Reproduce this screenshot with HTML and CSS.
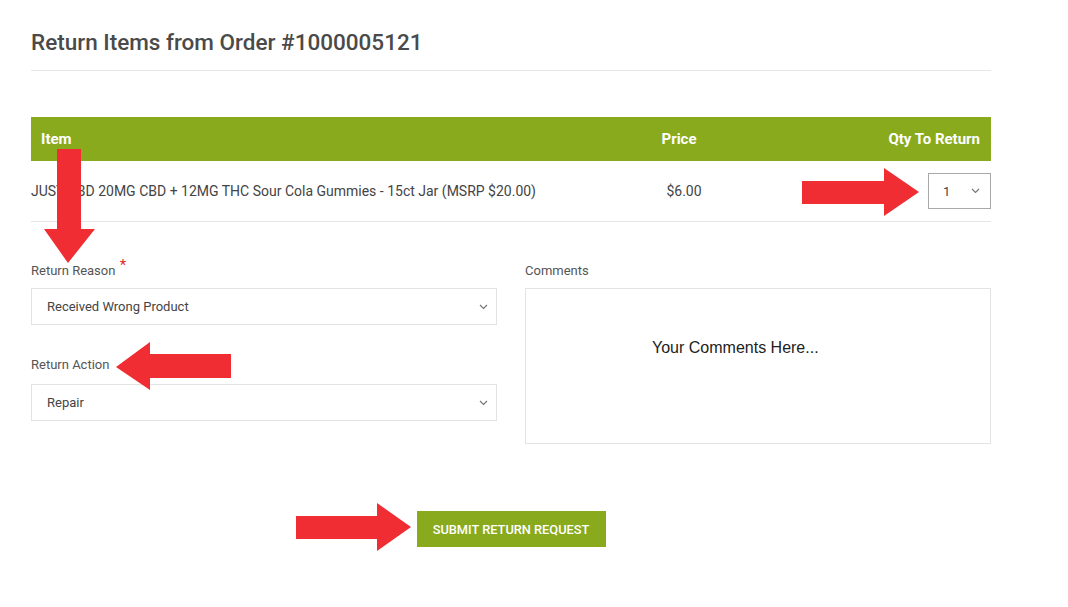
FILE: index.html
```html
<!DOCTYPE html>
<html>
<head>
<meta charset="utf-8">
<link rel="stylesheet" href="styles.css">
</head>
<body>
<div class="page">
  <h1 class="title">Return Items from Order #1000005121</h1>
  <table class="items">
    <thead>
      <tr>
        <th class="col-item">Item</th>
        <th class="col-price">Price</th>
        <th class="col-qty">Qty To Return</th>
      </tr>
    </thead>
    <tbody>
      <tr>
        <td class="col-item">JUST CBD 20MG CBD + 12MG THC Sour Cola Gummies - 15ct Jar (MSRP $20.00)</td>
        <td class="col-price">$6.00</td>
        <td class="col-qty">
          <div class="qty-select"><span>1</span>
            <svg class="chev" width="9" height="6" viewBox="0 0 9 6"><path d="M1 1l3.5 3.5L8 1" fill="none" stroke="#777" stroke-width="1.2"/></svg>
          </div>
        </td>
      </tr>
    </tbody>
  </table>

  <div class="form-grid">
    <div class="col">
      <div class="field">
        <label class="label label-req">Return Reason <span class="req">*</span></label>
        <div class="select"><span>Received Wrong Product</span>
          <svg class="chev" width="9" height="6" viewBox="0 0 9 6"><path d="M1 1l3.5 3.5L8 1" fill="none" stroke="#777" stroke-width="1.2"/></svg>
        </div>
      </div>
      <div class="field field-second">
        <label class="label label-second">Return Action</label>
        <div class="select"><span>Repair</span>
          <svg class="chev" width="9" height="6" viewBox="0 0 9 6"><path d="M1 1l3.5 3.5L8 1" fill="none" stroke="#777" stroke-width="1.2"/></svg>
        </div>
      </div>
    </div>
    <div class="col">
      <div class="field">
        <label class="label label-comments">Comments</label>
        <textarea class="comments" placeholder="Your Comments Here..."></textarea>
      </div>
    </div>
  </div>

  <div class="actions">
    <button class="submit">SUBMIT RETURN REQUEST</button>
  </div>
</div>

<svg class="arrows" width="1068" height="607" viewBox="0 0 1068 607">
  <polygon points="57,149 81,149 81,229 95,229 68,263 44,229 57,229"/>
  <polygon points="802,181 884,181 884,168 919,192 884,216 884,204 802,204"/>
  <polygon points="231,354 150,354 150,342 116,367 150,390 150,378 231,378"/>
  <polygon points="296,516 377,516 377,503 411,527 377,551 377,539 296,539"/>
</svg>
</body>
</html>
```

FILE: styles.css
```css
html, body {
  margin: 0;
  padding: 0;
  background: #fff;
}
body {
  font-family: Roboto, "Liberation Sans", Arial, sans-serif;
  color: #444;
  width: 1068px;
  height: 607px;
  overflow: hidden;
  position: relative;
}
.page {
  width: 960px;
  margin-left: 31px;
}
.title {
  margin: 0;
  padding: 29px 0 15px;
  font-size: 22.5px;
  line-height: 26px;
  font-weight: 500;
  color: #4a4a4a;
  border-bottom: 1px solid #e6e6e6;
}
.items {
  margin-top: 46px;
  width: 960px;
  border-collapse: collapse;
  table-layout: fixed;
}
.items th {
  background: #89aa1c;
  color: #fff;
  font-weight: 700;
  font-size: 15px;
  height: 44px;
  padding: 0;
  vertical-align: middle;
}
.items td {
  height: 60px;
  padding: 0;
  font-size: 14px;
  color: #444;
  border-bottom: 1px solid #e6e6e6;
  vertical-align: middle;
}
th.col-item { text-align: left; padding-left: 10px; width: 578px; }
td.col-item { text-align: left; }
th.col-price { text-align: center; width: 120px; padding-right: 10px; }
td.col-price { text-align: center; padding: 0; }
th.col-qty { text-align: right; padding-right: 11px; }
td.col-qty { text-align: right; }
.qty-select {
  display: inline-flex;
  align-items: center;
  justify-content: space-between;
  box-sizing: border-box;
  width: 63px;
  height: 36px;
  border: 1px solid #a9a9a9;
  padding: 0 10px 0 14px;
  font-size: 13px;
  color: #444;
  vertical-align: middle;
}
.form-grid {
  display: grid;
  grid-template-columns: 466px 466px;
  column-gap: 28px;
  margin-top: 40px;
}
.field {
  display: flex;
  flex-direction: column;
}
.field-second {
  margin-top: 32px;
}
.label {
  font-size: 13px;
  line-height: 16px;
  color: #555;
  margin-bottom: 10px;
}
.label-req {
  margin-bottom: 9px;
}
.label-second {
  margin-bottom: 11px;
}
.label-comments {
  margin-top: 1px;
  margin-bottom: 9px;
}
.req {
  color: #e02b27;
  font-size: 15px;
  position: relative;
  top: -5px;
  margin-left: 1px;
}
.select {
  box-sizing: border-box;
  height: 37px;
  border: 1px solid #e3e3e3;
  display: flex;
  align-items: center;
  justify-content: space-between;
  padding: 0 8px 0 15px;
  font-size: 13px;
  color: #444;
}
.comments {
  box-sizing: border-box;
  height: 156px;
  width: 466px;
  margin: 0;
  border: 1px solid #e3e3e3;
  padding: 50px 10px 0 126px;
  font-family: "Liberation Sans", Arial, sans-serif;
  font-size: 16px;
  line-height: 18px;
  resize: none;
  outline: none;
  display: block;
}
.comments::placeholder {
  color: #222;
  opacity: 1;
}
.actions {
  display: flex;
  justify-content: center;
  margin-top: 67px;
}
.submit {
  background: #89aa1c;
  color: #fff;
  border: 0;
  width: 189px;
  height: 36px;
  font-family: Roboto, "Liberation Sans", Arial, sans-serif;
  font-size: 12.8px;
  font-weight: 500;
  padding: 0;
  cursor: pointer;
}
.arrows {
  position: absolute;
  left: 0;
  top: 0;
  pointer-events: none;
  fill: #ef2d33;
}
```
